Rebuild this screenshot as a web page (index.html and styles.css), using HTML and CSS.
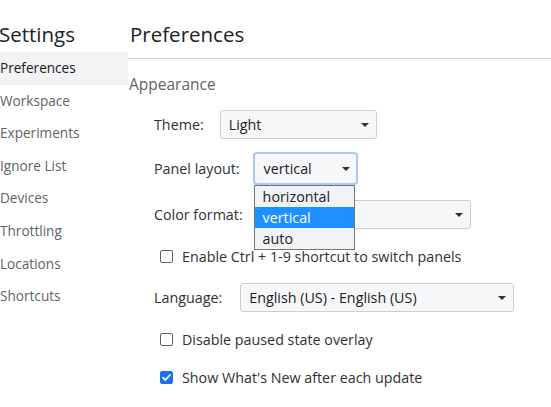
FILE: index.html
```html
<!DOCTYPE html>
<html>
<head>
<meta charset="utf-8">
<link rel="stylesheet" href="styles.css">
</head>
<body>
<div class="app">
  <nav class="sidebar">
    <div class="sidebar-title">Settings</div>
    <div class="nav-item active">Preferences</div>
    <div class="nav-item">Workspace</div>
    <div class="nav-item">Experiments</div>
    <div class="nav-item">Ignore List</div>
    <div class="nav-item">Devices</div>
    <div class="nav-item">Throttling</div>
    <div class="nav-item">Locations</div>
    <div class="nav-item">Shortcuts</div>
  </nav>
  <main class="main">
    <div class="main-header">Preferences</div>
    <div class="section-title">Appearance</div>

    <div class="row row-theme">
      <span class="label">Theme:</span>
      <div class="select select-theme"><span>Light</span><i class="arrow"></i></div>
    </div>

    <div class="row row-panel">
      <span class="label">Panel layout:</span>
      <div class="select-wrap">
        <div class="select select-panel focused"><span>vertical</span><i class="arrow"></i></div>
        <div class="dropdown">
          <div class="option">horizontal</div>
          <div class="option selected">vertical</div>
          <div class="option">auto</div>
        </div>
      </div>
    </div>

    <div class="row row-color">
      <span class="label">Color format:</span>
      <div class="select select-color"><span></span><i class="arrow"></i></div>
    </div>

    <div class="row row-check1">
      <span class="checkbox"></span>
      <span class="check-label">Enable Ctrl + 1-9 shortcut to switch panels</span>
    </div>

    <div class="row row-lang">
      <span class="label">Language:</span>
      <div class="select select-lang"><span>English (US) - English (US)</span><i class="arrow"></i></div>
    </div>

    <div class="row row-check2">
      <span class="checkbox"></span>
      <span class="check-label">Disable paused state overlay</span>
    </div>

    <div class="row row-check3">
      <span class="checkbox checked">
        <svg width="13" height="13" viewBox="0 0 13 13"><path d="M3 6.6 L5.4 9 L10 4" fill="none" stroke="#fff" stroke-width="1.8" stroke-linecap="round" stroke-linejoin="round"/></svg>
      </span>
      <span class="check-label">Show What's New after each update</span>
    </div>
  </main>
</div>
</body>
</html>
```

FILE: styles.css
```css
* { box-sizing: border-box; }

html, body {
  margin: 0;
  padding: 0;
  background: #ffffff;
}

body {
  font-family: "Open Sans", "Noto Sans", sans-serif;
  font-size: 14.3px;
  color: #202124;
  width: 551px;
  height: 407px;
  overflow: hidden;
}

.app {
  display: flex;
  height: 407px;
}

.sidebar {
  width: 128px;
  flex: none;
  display: flex;
  flex-direction: column;
}

.sidebar-title {
  height: 52px;
  font-size: 20.5px;
  line-height: 28px;
  padding-top: 20px;
  margin-left: -1px;
  color: #202124;
}

.nav-item {
  height: 32.6px;
  line-height: 32.6px;
  font-size: 13.6px;
  color: #5f6368;
  white-space: nowrap;
}

.nav-item.active {
  background: #f1f3f4;
  color: #202124;
}

.main {
  flex: 1;
  display: flex;
  flex-direction: column;
  min-width: 0;
}

.main-header {
  height: 59px;
  border-bottom: 1px solid #cfcfcf;
  font-size: 20.5px;
  line-height: 28px;
  padding-top: 20px;
  padding-left: 2px;
  color: #202124;
}

.section-title {
  margin-top: 15px;
  height: 20px;
  line-height: 20px;
  font-size: 15.5px;
  color: #5f6368;
  padding-left: 1px;
}

.row {
  display: flex;
  align-items: center;
  padding-left: 26px;
  color: #303134;
}

.label {
  margin-right: 16px;
  white-space: nowrap;
}

.row-panel .label { margin-right: 13px; }
.row-lang .label { margin-right: 18px; }

.select {
  height: 29px;
  display: flex;
  align-items: center;
  justify-content: space-between;
  padding: 0 7px 0 8px;
  background: #f6f7f8;
  border: 1px solid #cacdd1;
  border-radius: 3px;
  color: #202124;
  white-space: nowrap;
}

.arrow {
  width: 0;
  height: 0;
  border-left: 4px solid transparent;
  border-right: 4px solid transparent;
  border-top: 4px solid #303134;
  flex: none;
}

.row-theme { margin-top: 16px; height: 29px; }
.select-theme { width: 157px; }

.row-panel { margin-top: 13px; height: 33px; }
.select-wrap { position: relative; }
.select-panel { width: 105px; height: 33px; }
.select.focused {
  border: 2px solid #aac7f6;
  border-radius: 4px;
  padding-left: 9px;
  padding-right: 6px;
}

.dropdown {
  position: absolute;
  top: 33px;
  left: 1px;
  width: 101px;
  border: 1px solid #767676;
  background: #f1f3f4;
  z-index: 2;
}

.option {
  height: 21px;
  line-height: 21px;
  padding-left: 8px;
  font-size: 14.3px;
  color: #202124;
}

.option.selected {
  background: #1e90ff;
  color: #ffffff;
}

.row-color { margin-top: 15px; height: 29px; }
.select-color { width: 212px; }

.row-check1 { margin-top: 13px; height: 28px; padding-left: 32px; }
.row-lang { margin-top: 13px; height: 29px; }
.select-lang { width: 274px; }
.row-check2 { margin-top: 13px; height: 28px; padding-left: 32px; }
.row-check3 { margin-top: 10px; height: 28px; padding-left: 32px; }

.checkbox {
  width: 13px;
  height: 13px;
  border: 1px solid #5f6368;
  border-radius: 2px;
  margin-right: 9px;
  flex: none;
  display: flex;
  align-items: center;
  justify-content: center;
  background: #fff;
}

.checkbox.checked {
  background: #1a73e8;
  border-color: #1a73e8;
}

.checkbox svg { display: block; flex: none; }

.check-label {
  white-space: nowrap;
  color: #303134;
}
```
